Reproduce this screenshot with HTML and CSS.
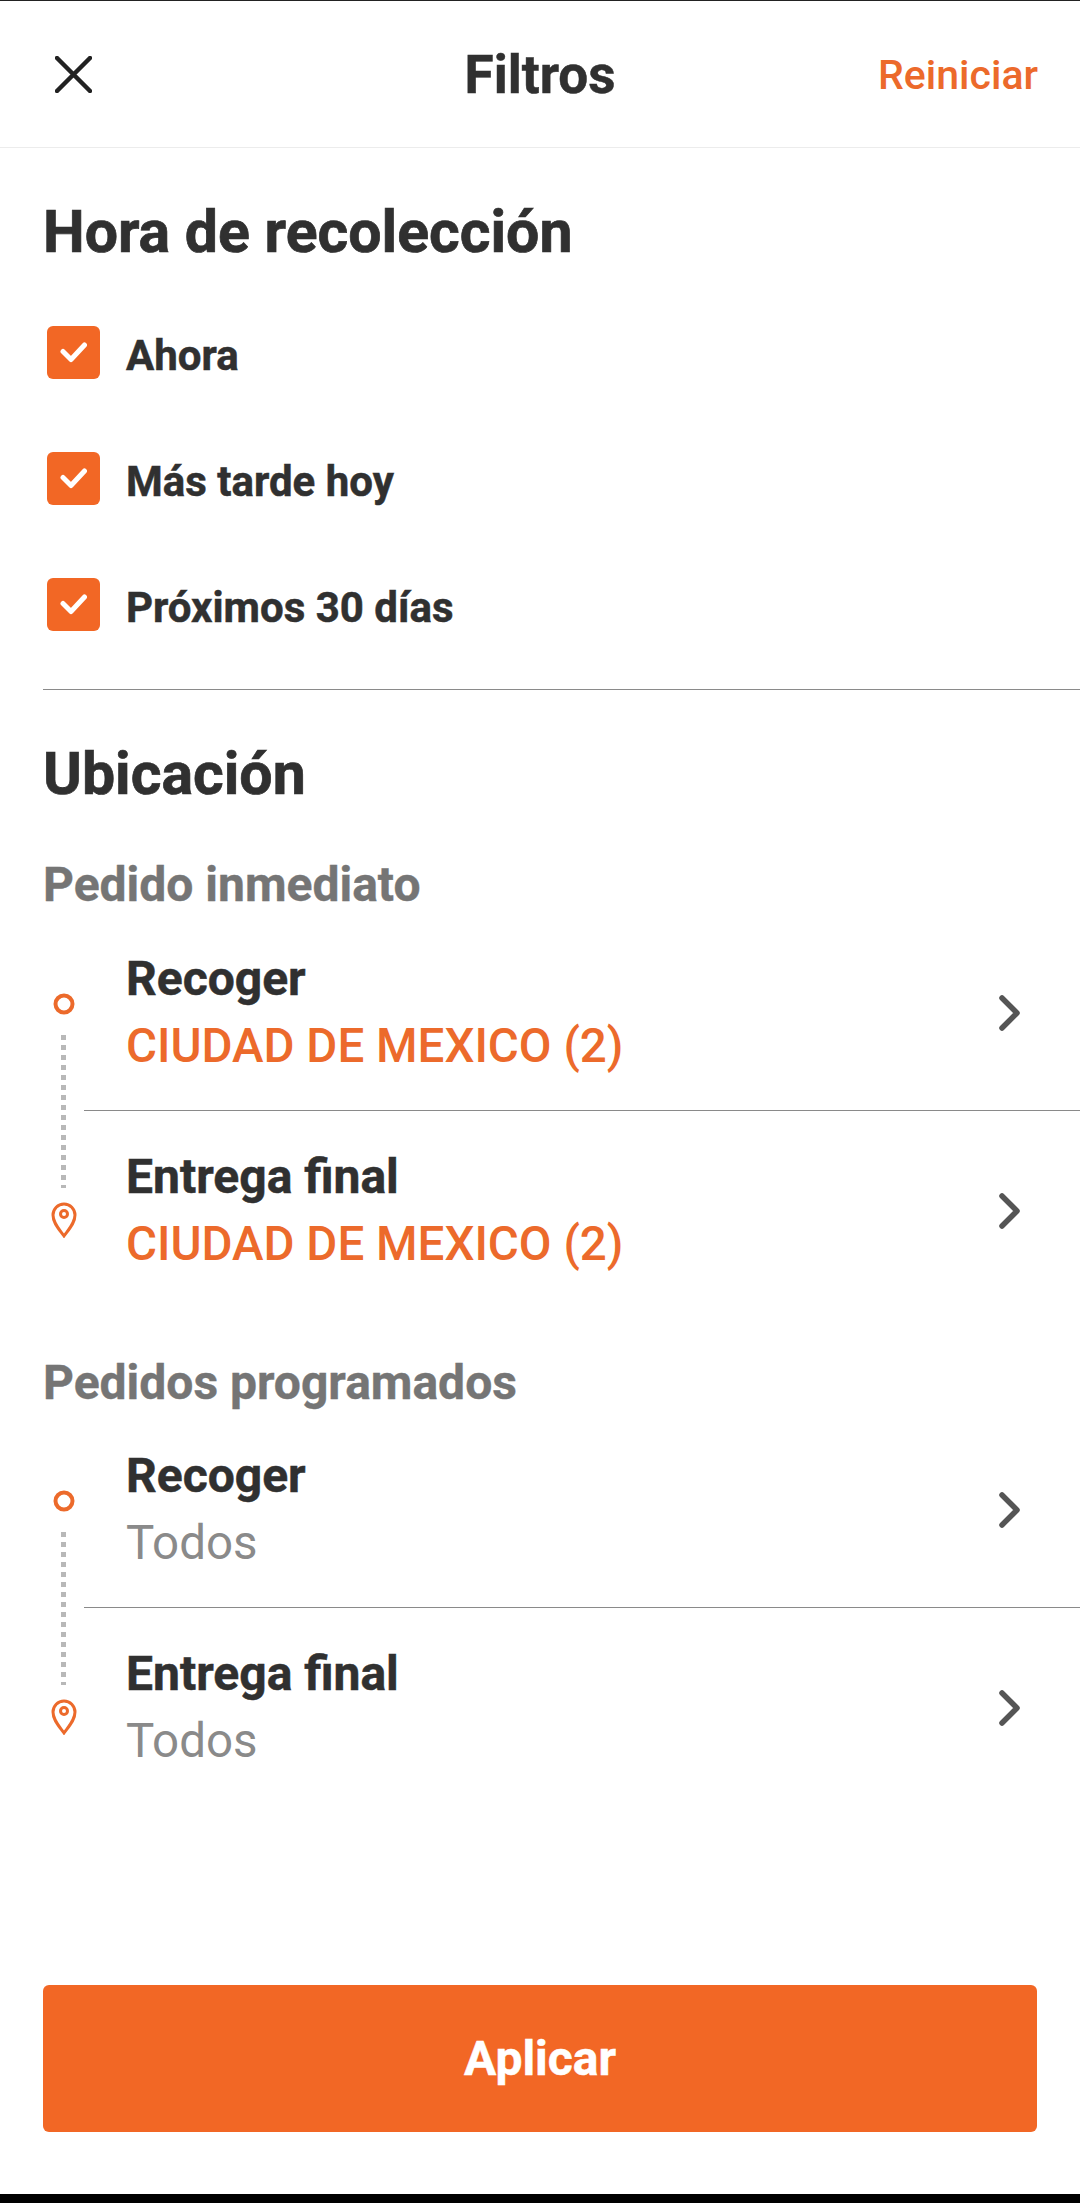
FILE: index.html
```html
<!DOCTYPE html>
<html lang="es">
<head>
<meta charset="utf-8">
<title>Filtros</title>
<link rel="stylesheet" href="styles.css">
</head>
<body>
<div class="screen">
  <header class="topbar">
    <svg class="close" viewBox="0 0 37 37"><path d="M2 2L35 35M35 2L2 35"/></svg>
    <h1 class="title">Filtros</h1>
    <span class="reset">Reiniciar</span>
  </header>
  <main class="content">
    <section class="time">
      <h2 class="heading">Hora de recolección</h2>
      <ul class="checks">
        <li class="check"><span class="box"><svg viewBox="0 0 27 22"><path d="M3 10.5L11 18.5L24.5 4"/></svg></span><span class="check-label">Ahora</span></li>
        <li class="check"><span class="box"><svg viewBox="0 0 27 22"><path d="M3 10.5L11 18.5L24.5 4"/></svg></span><span class="check-label">Más tarde hoy</span></li>
        <li class="check"><span class="box"><svg viewBox="0 0 27 22"><path d="M3 10.5L11 18.5L24.5 4"/></svg></span><span class="check-label">Próximos 30 días</span></li>
      </ul>
    </section>
    <section class="location">
      <h2 class="heading">Ubicación</h2>
      <h3 class="sub">Pedido inmediato</h3>
      <div class="route">
        <div class="track">
          <svg class="origin" viewBox="0 0 22 22"><circle cx="11" cy="11" r="8.5"/></svg>
          <div class="dots"></div>
          <svg class="pin" viewBox="0 0 26 36"><path d="M13 34C8 27 2 21 2 13A11 11 0 0 1 24 13C24 21 18 27 13 34Z"/><circle cx="13" cy="12" r="3.5"/></svg>
        </div>
        <div class="stops">
          <div class="stop stop-first">
            <div class="stop-text"><div class="stop-title">Recoger</div><div class="stop-value active">CIUDAD DE MEXICO (2)</div></div>
            <svg class="chev" viewBox="0 0 26 42"><path d="M5 6L20 21L5 36"/></svg>
          </div>
          <div class="stop stop-last">
            <div class="stop-text"><div class="stop-title">Entrega final</div><div class="stop-value active">CIUDAD DE MEXICO (2)</div></div>
            <svg class="chev" viewBox="0 0 26 42"><path d="M5 6L20 21L5 36"/></svg>
          </div>
        </div>
      </div>
      <h3 class="sub sub-next">Pedidos programados</h3>
      <div class="route">
        <div class="track">
          <svg class="origin" viewBox="0 0 22 22"><circle cx="11" cy="11" r="8.5"/></svg>
          <div class="dots"></div>
          <svg class="pin" viewBox="0 0 26 36"><path d="M13 34C8 27 2 21 2 13A11 11 0 0 1 24 13C24 21 18 27 13 34Z"/><circle cx="13" cy="12" r="3.5"/></svg>
        </div>
        <div class="stops">
          <div class="stop stop-first">
            <div class="stop-text"><div class="stop-title">Recoger</div><div class="stop-value">Todos</div></div>
            <svg class="chev" viewBox="0 0 26 42"><path d="M5 6L20 21L5 36"/></svg>
          </div>
          <div class="stop stop-last">
            <div class="stop-text"><div class="stop-title">Entrega final</div><div class="stop-value">Todos</div></div>
            <svg class="chev" viewBox="0 0 26 42"><path d="M5 6L20 21L5 36"/></svg>
          </div>
        </div>
      </div>
    </section>
  </main>
  <footer class="actions"><button class="apply">Aplicar</button></footer>
  <div class="navbar"></div>
</div>
</body>
</html>
```
FILE: styles.css
```css
* { box-sizing: border-box; }
html, body { margin: 0; padding: 0; background: #fff; }
body { font-family: Roboto, "Liberation Sans", sans-serif; color: #303030; }
.screen { width: 1080px; height: 2203px; display: flex; flex-direction: column; border-top: 1px solid #222; }
.topbar { height: 147px; flex: none; display: flex; align-items: center; justify-content: space-between; padding: 0 42px 0 55px; border-bottom: 1px solid #ececec; position: relative; }
.close { width: 37px; height: 37px; }
.close path { fill: none; stroke: #222; stroke-width: 4.5; stroke-linecap: round; }
.title { margin: 0; padding-top: 2px; font-size: 53px; font-weight: 700; line-height: 60px; position: absolute; left: 0; right: 0; text-align: center; pointer-events: none; -webkit-text-stroke: 0.5px #303030; }
.reset { font-size: 41px; font-weight: 500; color: #ec6a2b; line-height: 48px; padding-top: 2px; }
.content { flex: 1; padding-left: 43px; }
.heading { margin: 0; font-size: 59px; font-weight: 700; line-height: 66px; -webkit-text-stroke: 0.7px #303030; }
.time { padding-top: 51px; border-bottom: 1px solid #8a8a8a; height: 542px; }
.checks { list-style: none; margin: 60px 0 0; padding: 0; }
.check { display: flex; align-items: center; height: 54px; margin-bottom: 72px; }
.check-label { padding-top: 6px; font-size: 42px; font-weight: 700; -webkit-text-stroke: 0.5px #303030; }
.box { width: 53px; height: 53px; margin: 0 26px 0 4px; border-radius: 6px; background: #f26725; display: flex; align-items: center; justify-content: center; }
.box svg { width: 27px; height: 22px; }
.box path { fill: none; stroke: #fff; stroke-width: 5; stroke-linecap: round; stroke-linejoin: round; }
.location { padding-top: 51px; }
.sub { margin: 52px 0 0; font-size: 48px; font-weight: 700; line-height: 52px; color: #757575; -webkit-text-stroke: 0.4px #757575; }
.sub-next { margin-top: 50px; }
.route { display: flex; margin-top: 5px; }
.sub-next + .route { margin-top: 4px; }
.track { width: 41px; flex: none; display: flex; flex-direction: column; align-items: center; padding-top: 77px; }
.origin { width: 22px; height: 22px; }
.origin circle { fill: none; stroke: #ec6a2b; stroke-width: 4; }
.dots { width: 5px; height: 153px; margin-top: 20px; background: repeating-linear-gradient(to bottom, #b8b8b8 0, #b8b8b8 5px, transparent 5px, transparent 10px); }
.pin { width: 26px; height: 36px; margin-top: 14px; }
.pin path, .pin circle { fill: none; stroke: #ec6a2b; stroke-width: 3; }
.stops { flex: 1; }
.stop { height: 196px; display: flex; align-items: center; justify-content: space-between; padding: 0 57px 0 42px; }
.stop-first { height: 195px; border-bottom: 1px solid #8a8a8a; }
.stop-last { padding-top: 3px; }
.stop-title { font-size: 48px; font-weight: 700; line-height: 66px; -webkit-text-stroke: 0.5px #303030; }
.stop-value { font-size: 47.5px; line-height: 68px; color: #8a8a8a; }
.stop-value.active { color: #ec6a2b; font-weight: 500; }
.chev { width: 26px; height: 42px; }
.chev path { fill: none; stroke: #555; stroke-width: 5.5; stroke-linecap: round; stroke-linejoin: round; }
.actions { flex: none; padding: 0 43px 62px; }
.apply { display: block; width: 100%; height: 147px; border: 0; border-radius: 6px; background: #f26725; color: #fff; font-family: inherit; font-size: 48px; font-weight: 700; -webkit-text-stroke: 0.5px #fff; }
.navbar { height: 9px; flex: none; background: #000; }
```
